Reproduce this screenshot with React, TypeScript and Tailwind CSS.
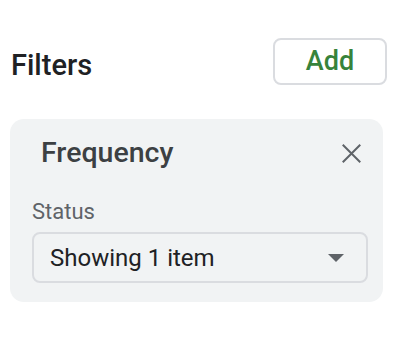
import React from 'react';

const App = () => {
  return (
    <div className="w-[418px] h-[360px] bg-white font-['Roboto',sans-serif]">
      {/* Header */}
      <div className="flex items-start justify-between pl-[11px] pr-[31px] pt-[38px]">
        <h2 className="mt-[10px] text-[29px] leading-[34px] font-medium text-[#202124]">Filters</h2>
        <button className="w-[114px] h-[47px] rounded-[8px] border-2 border-[#dadce0] text-[27px] leading-none font-medium text-[#37833b] bg-white">
          Add
        </button>
      </div>

      {/* Filter card */}
      <div className="ml-[10px] mt-[34px] w-[373px] h-[183px] rounded-[14px] bg-[#f1f3f4] pl-[22px] pr-[15px] pt-[16px]">
        <div className="flex items-center justify-between pl-[9px] pr-[6px]">
          <span className="text-[28.5px] leading-[36px] font-medium text-[#3c4043]">Frequency</span>
          <svg width="21" height="21" viewBox="0 0 24 24" fill="none" stroke="#5f6368" strokeWidth="2.3">
            <path d="M2 2 L22 22 M22 2 L2 22" />
          </svg>
        </div>
        <div className="mt-[28px] text-[22px] leading-[26px] text-[#5f6368]">Status</div>
        <div className="mt-[7px] h-[51px] w-[336px] rounded-[8px] border-2 border-[#dadce0] flex items-center justify-between pl-[16px] pr-[22px]">
          <span className="text-[24px] text-[#202124]">Showing 1 item</span>
          <svg width="16" height="8" viewBox="0 0 16 8">
            <path d="M0 0 L16 0 L8 8 Z" fill="#5f6368" />
          </svg>
        </div>
      </div>
    </div>
  );
};

export default App;
